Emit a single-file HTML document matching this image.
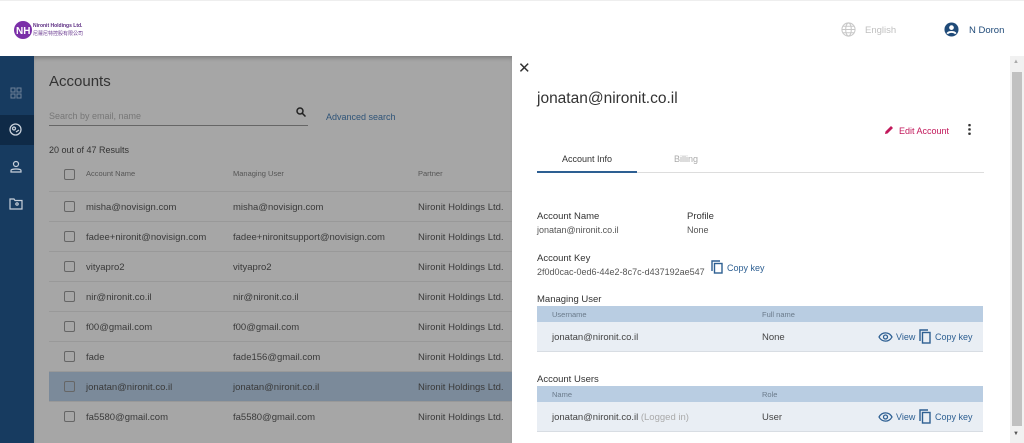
<!DOCTYPE html>
<html><head><meta charset="utf-8"><style>
*{margin:0;padding:0;box-sizing:border-box}
body{width:1024px;height:443px;overflow:hidden;font-family:"Liberation Sans",sans-serif;background:#fff;position:relative}
.hdr{position:absolute;left:0;top:0;width:1024px;height:56px;background:#fff;border-top:1px solid #eee}
.side{position:absolute;left:0;top:56px;width:34px;height:387px;background:#173b60}
.side .act{position:absolute;left:0;top:59px;width:40px;height:30px;background:#0f2a47}
.main{position:absolute;left:34px;top:56px;width:478px;height:387px;background:#a6a6a6;box-shadow:inset 0 4px 4px -2px rgba(0,0,0,.25)}
.t{position:absolute;white-space:nowrap}
.row{position:absolute;left:15px;width:470px;height:30px;border-top:1px solid #999;font-size:9.5px;color:#3a3a3a}
.row span{position:absolute;top:10px}
.cb{position:absolute;left:15px;top:9px;width:11px;height:11px;border:1px solid #666;border-radius:2px}
.panel{position:absolute;left:512px;top:56px;width:512px;height:387px;background:#fff}
.lab{font-size:9.5px;color:#333}
.val{font-size:9px;color:#555}
.blue{color:#2d5f92}
.tbl{position:absolute;left:25px;width:446px}
.th{height:16px;background:#b9cde2;font-size:7.5px;color:#6a7a8a;position:relative}
.tr{height:30px;background:#e9eef4;font-size:9.5px;color:#444;position:relative;border-bottom:1px solid #d8dde3}
</style></head><body>
<div class="hdr">
 <svg class="t" style="left:13px;top:19px" width="20" height="20" viewBox="0 0 20 20"><circle cx="10" cy="10" r="9" fill="#7b2fa8"/><text x="3" y="14" font-size="10" font-family="Liberation Sans" fill="#fff" font-weight="bold">NH</text></svg>
 <div class="t" style="left:33px;top:22px;font-size:5px;color:#5a2a80;font-weight:bold">Nironit Holdings Ltd.</div>
 <div class="t" style="left:33px;top:29px;font-size:5px;color:#6a3a90;font-family:'Noto Sans CJK TC',sans-serif">尼蘿尼特控股有限公司</div>
 <svg class="t" style="left:841px;top:21px" width="15" height="15" viewBox="0 0 16 16" fill="none" stroke="#c8c8c8" stroke-width="1.1"><circle cx="8" cy="8" r="7"/><ellipse cx="8" cy="8" rx="3" ry="7"/><path d="M1 8h14M2 4.5h12M2 11.5h12"/></svg>
 <div class="t" style="left:865px;top:24px;font-size:9.5px;color:#c0c0c0">English</div>
 <svg class="t" style="left:944px;top:21px" width="15" height="15" viewBox="0 0 16 16"><circle cx="8" cy="8" r="7.5" fill="#1f4a78"/><circle cx="8" cy="6" r="2.5" fill="#fff"/><path d="M3.5 12.5c1.5-2.5 7.5-2.5 9 0" stroke="#fff" stroke-width="2" fill="none"/></svg>
 <div class="t" style="left:969px;top:24px;font-size:9.5px;color:#1f4a78">N Doron</div>
</div>
<div class="side">
 <div class="act"></div>
 <svg class="t" style="left:10px;top:31px" width="12" height="12" viewBox="0 0 12 12" fill="none" stroke="#6f8197"><rect x="1" y="1" width="4" height="4"/><rect x="7" y="1" width="4" height="4"/><rect x="1" y="7" width="4" height="4"/><rect x="7" y="7" width="4" height="4"/></svg>
 <svg class="t" style="left:9px;top:67px" width="13" height="13" viewBox="0 0 13 13" fill="none" stroke="#c8d0da" stroke-width="1.3"><circle cx="6.5" cy="6.5" r="5.5"/><circle cx="5" cy="5.5" r="1.5"/><path d="M7 9l3-2"/></svg>
 <svg class="t" style="left:10px;top:104px" width="12" height="13" viewBox="0 0 12 13" fill="none" stroke="#c8d0da" stroke-width="1.2"><circle cx="6" cy="4" r="2.5"/><path d="M1 12v-1.5c0-2 10-2 10 0V12z"/></svg>
 <svg class="t" style="left:9px;top:142px" width="14" height="12" viewBox="0 0 14 12" fill="none" stroke="#c8d0da" stroke-width="1.2"><path d="M1 1h4l1 1.5h7V11H1z"/><circle cx="8" cy="6" r="1.2"/></svg>
</div>
<div class="main">
 <div class="t" style="left:15px;top:17px;font-size:15px;color:#333">Accounts</div>
 <div class="t" style="left:15px;top:55px;font-size:9px;color:#777">Search by email, name</div>
 <div class="t" style="left:15px;top:69px;width:259px;height:1px;background:#666"></div>
 <svg class="t" style="left:262px;top:51px" width="10" height="10" viewBox="0 0 10 10" fill="none" stroke="#222" stroke-width="1.5"><circle cx="4" cy="4" r="3"/><path d="M6.2 6.2L9.5 9.5"/></svg>
 <div class="t" style="left:292px;top:56px;font-size:9px;color:#2f5478">Advanced search</div>
 <div class="t" style="left:15px;top:89px;font-size:9px;color:#333">20 out of 47 Results</div>
 <div class="t" style="left:15px;top:105px;width:470px;height:30px;font-size:7.5px;color:#555">
  <div class="cb" style="top:8px"></div><span class="t" style="left:37px;top:8px">Account Name</span><span class="t" style="left:184px;top:8px">Managing User</span><span class="t" style="left:369px;top:8px">Partner</span></div>
 <div class="row" style="top:135px"><div class="cb"></div><span style="left:37px">misha@novisign.com</span><span style="left:184px">misha@novisign.com</span><span style="left:369px">Nironit Holdings Ltd.</span></div>
 <div class="row" style="top:165px"><div class="cb"></div><span style="left:37px">fadee+nironit@novisign.com</span><span style="left:184px">fadee+nironitsupport@novisign.com</span><span style="left:369px">Nironit Holdings Ltd.</span></div>
 <div class="row" style="top:195px"><div class="cb"></div><span style="left:37px">vityapro2</span><span style="left:184px">vityapro2</span><span style="left:369px">Nironit Holdings Ltd.</span></div>
 <div class="row" style="top:225px"><div class="cb"></div><span style="left:37px">nir@nironit.co.il</span><span style="left:184px">nir@nironit.co.il</span><span style="left:369px">Nironit Holdings Ltd.</span></div>
 <div class="row" style="top:255px"><div class="cb"></div><span style="left:37px">f00@gmail.com</span><span style="left:184px">f00@gmail.com</span><span style="left:369px">Nironit Holdings Ltd.</span></div>
 <div class="row" style="top:285px"><div class="cb"></div><span style="left:37px">fade</span><span style="left:184px">fade156@gmail.com</span><span style="left:369px">Nironit Holdings Ltd.</span></div>
 <div class="row" style="top:315px;background:#7b8a9a"><div class="cb"></div><span style="left:37px">jonatan@nironit.co.il</span><span style="left:184px">jonatan@nironit.co.il</span><span style="left:369px">Nironit Holdings Ltd.</span></div>
 <div class="row" style="top:345px"><div class="cb"></div><span style="left:37px">fa5580@gmail.com</span><span style="left:184px">fa5580@gmail.com</span><span style="left:369px">Nironit Holdings Ltd.</span></div>
</div>
<div class="panel">
 <div class="t" style="left:6px;top:3px;font-size:15px;color:#333">✕</div>
 <div class="t" style="left:25px;top:34px;font-size:15.5px;color:#333">jonatan@nironit.co.il</div>
 <svg class="t" style="left:372px;top:69px" width="10" height="10" viewBox="0 0 10 10"><path d="M1 9l.5-2.5L7 1l2 2-5.5 5.5z" fill="#c2185b"/></svg>
 <div class="t" style="left:387px;top:70px;font-size:9px;color:#c2185b">Edit Account</div>
 <div class="t" style="left:456px;top:67px;width:3px;height:13px;background:radial-gradient(circle,#333 1.2px,transparent 1.4px) 0 0/3px 4.3px"></div>
 <div class="t" style="left:50px;top:98px;font-size:9px;color:#333">Account Info</div>
 <div class="t" style="left:162px;top:98px;font-size:9px;color:#aaa">Billing</div>
 <div class="t" style="left:25px;top:116px;width:447px;height:1px;background:#ddd"></div>
 <div class="t" style="left:25px;top:115px;width:100px;height:2px;background:#2d5f92"></div>
 <div class="t lab" style="left:25px;top:155px">Account Name</div>
 <div class="t val" style="left:25px;top:169px">jonatan@nironit.co.il</div>
 <div class="t lab" style="left:175px;top:155px">Profile</div>
 <div class="t val" style="left:175px;top:169px">None</div>
 <div class="t lab" style="left:25px;top:197px">Account Key</div>
 <div class="t val" style="left:25px;top:211px">2f0d0cac-0ed6-44e2-8c7c-d437192ae547</div>
 <svg class="t" style="left:199px;top:204px" width="12" height="14" viewBox="0 0 12 14" fill="none" stroke="#2d5f92" stroke-width="1.4"><path d="M1 11V1h8"/><rect x="3.5" y="3.5" width="7.5" height="9.5"/></svg>
 <div class="t" style="left:215px;top:207px;font-size:9px;color:#2d5f92">Copy key</div>
 <div class="t lab" style="left:25px;top:238px">Managing User</div>
 <div class="tbl" style="top:250px">
  <div class="th"><span class="t" style="left:15px;top:4px">Username</span><span class="t" style="left:225px;top:4px">Full name</span></div>
  <div class="tr"><span class="t" style="left:15px;top:10px">jonatan@nironit.co.il</span><span class="t" style="left:225px;top:10px">None</span>
   <svg class="t" style="left:341px;top:10px" width="15" height="10" viewBox="0 0 15 10" fill="none" stroke="#2d5f92" stroke-width="1.3"><path d="M1 5c3-5.5 10-5.5 13 0-3 5.5-10 5.5-13 0z"/><circle cx="7.5" cy="5" r="2"/></svg>
   <span class="t blue" style="left:359px;top:10px;font-size:9px">View</span>
   <svg class="t" style="left:382px;top:7px" width="12" height="15" viewBox="0 0 12 15" fill="none" stroke="#2d5f92" stroke-width="1.4"><path d="M1 12V1h8"/><rect x="3.5" y="3.5" width="7.5" height="10.5"/></svg>
   <span class="t blue" style="left:398px;top:10px;font-size:9px">Copy key</span></div>
 </div>
 <div class="t lab" style="left:25px;top:318px">Account Users</div>
 <div class="tbl" style="top:330px">
  <div class="th"><span class="t" style="left:15px;top:4px">Name</span><span class="t" style="left:225px;top:4px">Role</span></div>
  <div class="tr"><span class="t" style="left:15px;top:10px">jonatan@nironit.co.il <span style="color:#aaa">(Logged in)</span></span><span class="t" style="left:225px;top:10px">User</span>
   <svg class="t" style="left:341px;top:10px" width="15" height="10" viewBox="0 0 15 10" fill="none" stroke="#2d5f92" stroke-width="1.3"><path d="M1 5c3-5.5 10-5.5 13 0-3 5.5-10 5.5-13 0z"/><circle cx="7.5" cy="5" r="2"/></svg>
   <span class="t blue" style="left:359px;top:10px;font-size:9px">View</span>
   <svg class="t" style="left:382px;top:7px" width="12" height="15" viewBox="0 0 12 15" fill="none" stroke="#2d5f92" stroke-width="1.4"><path d="M1 12V1h8"/><rect x="3.5" y="3.5" width="7.5" height="10.5"/></svg>
   <span class="t blue" style="left:398px;top:10px;font-size:9px">Copy key</span></div>
 </div>
 <div class="t" style="left:498px;top:0;width:14px;height:387px;background:#f1f1f1"></div>
 <div class="t" style="left:500px;top:16px;width:10px;height:354px;background:#c1c1c1"></div>
 <div class="t" style="left:501px;top:3px;font-size:6px;color:#aaa">▲</div>
 <div class="t" style="left:501px;top:375px;font-size:6px;color:#555">▼</div>
</div>
</body></html>
